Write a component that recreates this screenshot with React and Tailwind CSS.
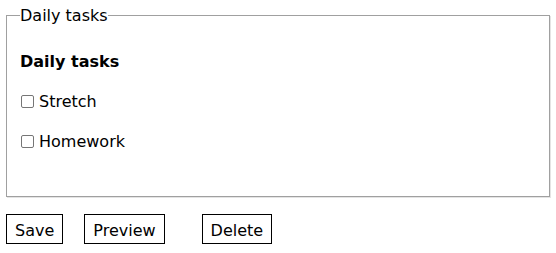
const tasks = ["Stretch", "Homework"];

const Checkbox = () => (
  <span className="inline-block w-[13px] h-[13px] ml-[1px] mr-[5px] border border-[#767676] rounded-[2px] bg-white" />
);

export default function App() {
  return (
    <div className="bg-white text-black text-base leading-[19px] font-['DejaVu_Sans',sans-serif] w-[556px] h-[253px]">
      <fieldset className="mx-[6px] mt-[6px] pl-[13px] pr-3 pb-[45px] border border-[#a0a0a0] shadow-[1px_1px_0_#e4e4e4]">
        <legend className="px-0">Daily tasks</legend>
        <h3 className="mt-[27px] font-bold">Daily tasks</h3>
        <div className="mt-[21px] flex flex-col gap-[21px]">
          {tasks.map((t) => (
            <label key={t} className="flex items-center">
              <Checkbox />
              <span>{t}</span>
            </label>
          ))}
        </div>
      </fieldset>
      <div className="flex mt-[17px] ml-[6px]">
        <button className="h-[30px] px-2 pt-[2px] border border-black bg-white">Save</button>
        <button className="h-[30px] px-2 pt-[2px] ml-[21px] border border-black bg-white">Preview</button>
        <button className="h-[30px] px-2 pt-[2px] ml-[37px] border border-black bg-white">Delete</button>
      </div>
    </div>
  );
}
